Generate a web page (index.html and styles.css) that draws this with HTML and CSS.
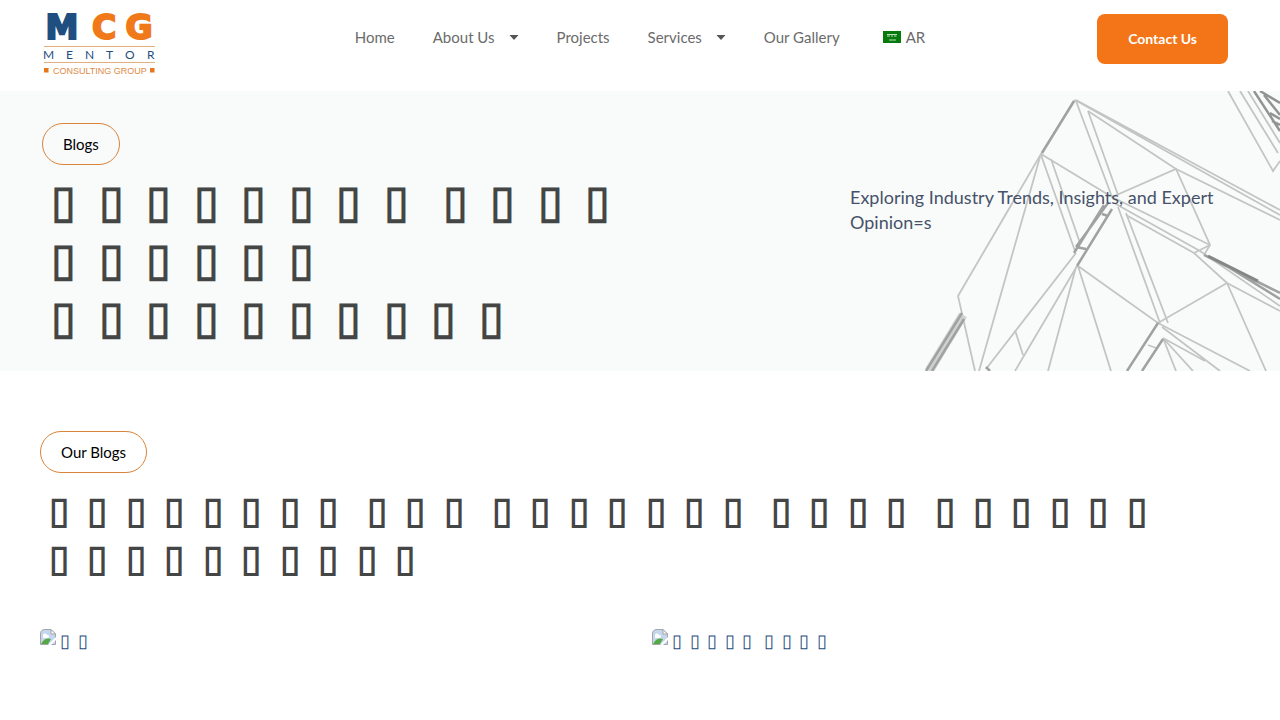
FILE: index.html
```html
<!DOCTYPE html>
<html lang="en">
  <head>
    <meta charset="UTF-8" />
    <meta name="viewport" content="width=device-width, initial-scale=1.0" />
    <title>Blogs - MCG Mentor Consulting Group</title>
    <link rel="stylesheet" href="styles.css">
  </head>
  <body>
    <header class="site-header">
      <a class="logo" href="#" aria-label="MCG Mentor Consulting Group">
        <svg width="118" height="68" viewBox="0 0 118 68">
          <g class="logo-mark" text-anchor="middle">
            <text x="22" y="31" fill="#1f4e80" stroke="#1f4e80">M</text>
            <text x="64" y="31" fill="#f07a1a" stroke="#f07a1a">C</text>
            <text x="99" y="31" fill="#f07a1a" stroke="#f07a1a">G</text>
          </g>
          <path d="M4 38.5H115M4 54.5H115" stroke="#e2b07c" />
          <g class="logo-name">
            <text x="3" y="51">M</text>
            <text x="26" y="51">E</text>
            <text x="45" y="51">N</text>
            <text x="66" y="51">T</text>
            <text x="85" y="51">O</text>
            <text x="107" y="51">R</text>
          </g>
          <text class="logo-sub" x="13" y="66">CONSULTING GROUP</text>
          <path d="M4 60h4.500v4.500h-4.500zM110 60h4.500v4.500h-4.500z" fill="#e5761c" />
        </svg>
      </a>
      <nav class="main-nav">
        <a href="#">Home</a>
        <a href="#">About Us <svg class="caret" width="10" height="5" viewBox="0 0 10 5"><path d="M0.500 0H9.500L5 5z" /></svg></a>
        <a href="#">Projects</a>
        <a href="#">Services <svg class="caret" width="10" height="5" viewBox="0 0 10 5"><path d="M0.500 0H9.500L5 5z" /></svg></a>
        <a href="#">Our Gallery</a>
        <a class="lang" href="#">
          <svg width="18" height="12" viewBox="0 0 18 12">
            <rect width="18" height="12" fill="#067a0d" />
            <path d="M4 3.500h10M4 5h3M8 5h2M11 5h2.500M6 9h7" stroke="#b9dcb9" />
          </svg>
          AR
        </a>
      </nav>
      <a class="contact-btn" href="#">Contact Us</a>
    </header>

    <main>
      <section class="hero">
        <svg class="hero-art" width="380" height="280" viewBox="0 0 380 280" fill="none" stroke="#c3c5c4" stroke-width="1.800">
          <path d="M175 9L141 63L58 205L75 280M175 9L380 124M176 9L380 119M188 20L276 78L380 129" />
          <path d="M176 10L212 106M188 20L218 104M218 116L260 232M226 122L268 232M141 63L212 106L276 78L310 154L304 164M140 66L79 280M141 64L175 160M151 68L180 152" />
          <path d="M212 106L310 154M214 112L300 160L380 215M226 124L294 162L327 192L380 220M294 162L310 154" />
          <path d="M176 162L86 278M177 175L115 280M176 176L148 280M178 175L258 232L327 192L366 280M178 175L211 280M115 239L123 264" />
          <path d="M258 232L350 280M262 236L320 280M263 247L276 280M263 247L293 280M263 247L305 270M248 254L256 257" />
          <path d="M328 0L373 80L380 70M340 0L378 62M348 0L380 52" />
          <path d="M174 10L142 62M208 112L176 156M204 114L174 162M212 118L177 175M176 156L186 158M202 123L208 125" stroke="#a0a2a1" stroke-width="2.500" />
          <path d="M63 224L29 280" stroke="#d0d2d1" stroke-width="9" />
          <path d="M62 222L26 280M64 228L32 280M258 232L227 280M263 248L242 280M86 276L90 280M304 164L380 202M320 171L380 208" stroke="#a0a2a1" stroke-width="2.500" />
          <path d="M308 165L358 190" stroke="#858786" stroke-width="3" />
          <path d="M354 0L380 40M360 0L380 12M364 4L380 24M370 22L380 28M372 30L380 34" stroke="#929493" stroke-width="2.500" />
        </svg>
        <div class="hero-title">
          <span class="badge">Blogs</span>
          <h1>
            <span class="word">▯&#8197;&#8197;▯&#8197;&#8197;▯&#8197;&#8197;▯&#8197;&#8197;▯&#8197;&#8197;▯&#8197;&#8197;▯&#8197;&#8197;▯&#8197;&#8197;</span>
            <span class="word">▯&#8197;&#8197;▯&#8197;&#8197;▯&#8197;&#8197;▯&#8197;&#8197;</span>
            <span class="word">▯&#8197;&#8197;▯&#8197;&#8197;▯&#8197;&#8197;▯&#8197;&#8197;▯&#8197;&#8197;▯&#8197;&#8197;</span>
            <span class="word">▯&#8197;&#8197;▯&#8197;&#8197;▯&#8197;&#8197;▯&#8197;&#8197;▯&#8197;&#8197;▯&#8197;&#8197;▯&#8197;&#8197;▯&#8197;&#8197;▯&#8197;&#8197;▯&#8197;&#8197;</span>
          </h1>
        </div>
        <p class="hero-text">Exploring Industry Trends, Insights, and Expert Opinion=s</p>
      </section>

      <section class="blogs">
        <span class="badge">Our Blogs</span>
        <h2>
          <span class="word">▯&#8197;&#8197;▯&#8197;&#8197;▯&#8197;&#8197;▯&#8197;&#8197;▯&#8197;&#8197;▯&#8197;&#8197;▯&#8197;&#8197;▯&#8197;&#8197;</span>
          <span class="word">▯&#8197;&#8197;▯&#8197;&#8197;▯&#8197;&#8197;</span>
          <span class="word">▯&#8197;&#8197;▯&#8197;&#8197;▯&#8197;&#8197;▯&#8197;&#8197;▯&#8197;&#8197;▯&#8197;&#8197;▯&#8197;&#8197;</span>
          <span class="word">▯&#8197;&#8197;▯&#8197;&#8197;▯&#8197;&#8197;▯&#8197;&#8197;</span>
          <span class="word">▯&#8197;&#8197;▯&#8197;&#8197;▯&#8197;&#8197;▯&#8197;&#8197;▯&#8197;&#8197;▯&#8197;&#8197;</span>
          <span class="word">▯&#8197;&#8197;▯&#8197;&#8197;▯&#8197;&#8197;▯&#8197;&#8197;▯&#8197;&#8197;▯&#8197;&#8197;▯&#8197;&#8197;▯&#8197;&#8197;▯&#8197;&#8197;▯&#8197;&#8197;</span>
        </h2>
        <div class="posts">
          <a class="post" href="#">
            <svg width="16" height="16" viewBox="0 0 16 16">
              <path d="M0.500 15.500V5Q0.500 0.500 5 0.500H11L15.500 5V15.500z" fill="#c5d7ee" stroke="#a3a5a8" />
              <path d="M11 0.500V5H15.500z" fill="#fff" stroke="#a3a5a8" />
              <path d="M3 7a2 2 0 0 1 4-1a1.500 1.500 0 0 1 1 3H3z" fill="#fff" />
              <path d="M1 15Q5 8 11 10L8 15z" fill="#55a944" />
              <path d="M8 16L16 8V11L11 16z" fill="#fff" />
            </svg>
            <span>▯&#8197;&#8198;▯</span>
          </a>
          <a class="post" href="#">
            <svg width="16" height="16" viewBox="0 0 16 16">
              <path d="M0.500 15.500V5Q0.500 0.500 5 0.500H11L15.500 5V15.500z" fill="#c5d7ee" stroke="#a3a5a8" />
              <path d="M11 0.500V5H15.500z" fill="#fff" stroke="#a3a5a8" />
              <path d="M3 7a2 2 0 0 1 4-1a1.500 1.500 0 0 1 1 3H3z" fill="#fff" />
              <path d="M1 15Q5 8 11 10L8 15z" fill="#55a944" />
              <path d="M8 16L16 8V11L11 16z" fill="#fff" />
            </svg>
            <span>▯&#8197;&#8198;▯&#8197;&#8198;▯&#8197;&#8198;▯&#8197;&#8198;▯&#8197;&#8198; ▯&#8197;&#8198;▯&#8197;&#8198;▯&#8197;&#8198;▯</span>
          </a>
        </div>
      </section>
    </main>
  </body>
</html>
```
FILE: styles.css
```css
* {
  margin: 0;
  padding: 0;
  box-sizing: border-box;
}

body {
  font-family: Lato, sans-serif;
  background-color: #fff;
  color: #444645;
  overflow-x: hidden;
}

a {
  text-decoration: none;
}

.site-header {
  display: grid;
  grid-template-columns: 1fr auto 1fr;
  align-items: start;
  padding: 8px 52px 15px 40px;
}

.logo svg {
  display: block;
}

.logo-mark {
  font: bold 33px "DejaVu Sans", sans-serif;
  stroke-width: 2;
}

.logo-name {
  font: 12px Lato, sans-serif;
  fill: #1f4e80;
}

.logo-sub {
  font: 9px "Liberation Sans", sans-serif;
  fill: #e08a44;
}

.main-nav {
  display: flex;
  gap: 38px;
  padding: 19px 0 0 12px;
}

.main-nav a {
  display: flex;
  align-items: center;
  font-size: 15px;
  line-height: 20px;
  color: #6b6b6b;
}

.caret {
  margin-left: 14px;
  fill: #555;
}

.main-nav .lang {
  gap: 5px;
  margin-left: 5px;
}

.contact-btn {
  justify-self: end;
  margin-top: 6px;
  padding: 15px 31px;
  border-radius: 8px;
  background-color: #f37518;
  color: #fff;
  font-size: 14px;
  font-weight: bold;
  line-height: 20px;
}

.hero {
  position: relative;
  display: flex;
  justify-content: space-between;
  padding: 32px 42px 26px;
  background-color: #f9fbfa;
}

.hero-art {
  position: absolute;
  top: 0;
  right: 0;
}

.hero-title {
  max-width: 620px;
}

.badge {
  display: inline-block;
  padding: 10px 20px;
  border: 1px solid #d9843b;
  border-radius: 21px;
  color: #000;
  font-size: 15px;
  line-height: 20px;
}

h1,
h2 {
  padding-left: 9px;
  font-family: "Noto Sans";
}

h1 {
  margin-top: 6px;
  font-size: 45px;
  line-height: 58px;
}

.word {
  white-space: nowrap;
}

.hero-text {
  position: relative;
  width: 388px;
  padding-top: 62px;
  color: #47526a;
  font-size: 18px;
  line-height: 25px;
}

.blogs {
  padding: 60px 40px;
}

h2 {
  margin-top: 12px;
  font-size: 37px;
  line-height: 48px;
}

.posts {
  display: grid;
  grid-template-columns: 1fr 1fr;
  gap: 24px;
  margin-top: 48px;
}

.post {
  display: flex;
  gap: 4px;
  color: #1f4e80;
  font-family: "Noto Sans";
  font-size: 18px;
  line-height: 23px;
}
```
